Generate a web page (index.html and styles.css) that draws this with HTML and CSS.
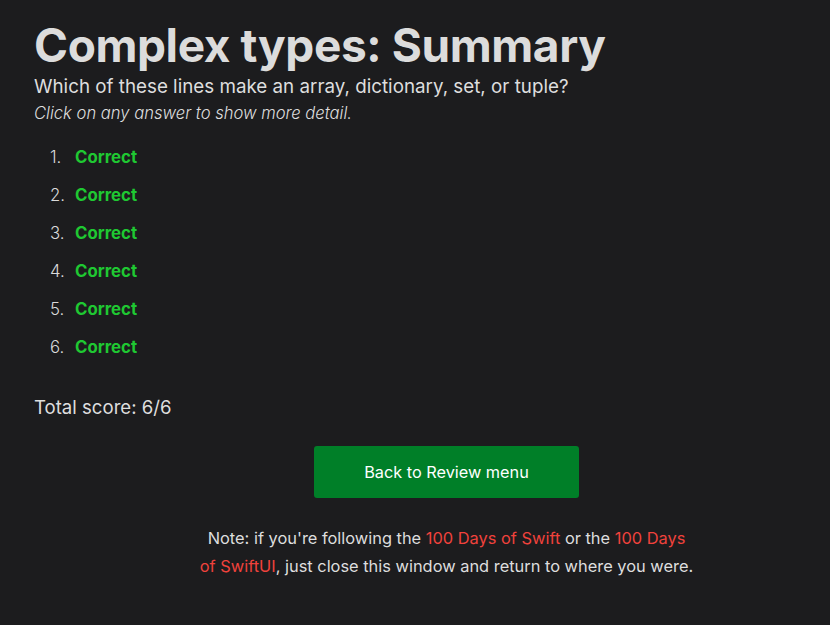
FILE: index.html
```html
<!DOCTYPE html>
<html>
<head>
<meta charset="utf-8">
<link rel="stylesheet" href="styles.css">
</head>
<body>
<main class="page">
  <h1 class="title">Complex types: Summary</h1>
  <p class="question">Which of these lines make an array, dictionary, set, or tuple?</p>
  <p class="hint">Click on any answer to show more detail.</p>
  <ol class="answers">
    <li><span class="correct">Correct</span></li>
    <li><span class="correct">Correct</span></li>
    <li><span class="correct">Correct</span></li>
    <li><span class="correct">Correct</span></li>
    <li><span class="correct">Correct</span></li>
    <li><span class="correct">Correct</span></li>
  </ol>
  <p class="score">Total score: 6/6</p>
  <div class="actions">
    <a class="button" href="#">Back to Review menu</a>
  </div>
  <p class="note">Note: if you're following the <a href="#">100 Days of Swift</a> or the <a href="#">100 Days of SwiftUI</a>, just close this window and return to where you were.</p>
</main>
</body>
</html>
```
FILE: styles.css
```css
html, body {
  margin: 0;
  padding: 0;
  background: #1c1c1e;
  overflow: hidden;
}
body {
  font-family: Inter, "Noto Sans", sans-serif;
  color: #dedede;
}
.page {
  width: 825px;
  padding: 16px 0 0 34px;
  box-sizing: content-box;
}
.title {
  margin: 0;
  font-size: 46px;
  font-weight: 700;
  line-height: 58px;
  letter-spacing: -0.4px;
  color: #dcdcdc;
}
.question {
  margin: 0;
  font-size: 18.8px;
  line-height: 26px;
}
.hint {
  margin: 0;
  font-size: 16.6px;
  font-style: italic;
  font-weight: 300;
  line-height: 26px;
}
.answers {
  list-style: none;
  counter-reset: item;
  margin: 20px 0 0;
  padding: 0 0 0 16px;
  font-size: 16.8px;
  line-height: 22px;
}
.answers li {
  counter-increment: item;
  display: flex;
  margin-bottom: 16px;
}
.answers li::before {
  content: counter(item) ".";
  width: 25px;
  color: #dadada;
  font-weight: 300;
}
.correct {
  color: #1fc832;
  font-weight: 700;
}
.score {
  margin: 37px 0 0;
  font-size: 18.6px;
  line-height: 24px;
}
.actions {
  display: flex;
  justify-content: center;
  margin-top: 27px;
}
.button {
  display: flex;
  align-items: center;
  justify-content: center;
  width: 265px;
  height: 52px;
  background: #007f28;
  color: #ffffff;
  text-decoration: none;
  border-radius: 3px;
  font-size: 16.3px;
}
.note {
  width: 495px;
  margin: 26px auto 0;
  text-align: center;
  font-size: 16.4px;
  line-height: 28px;
}
.note a {
  color: #f0423c;
  text-decoration: none;
}
```
